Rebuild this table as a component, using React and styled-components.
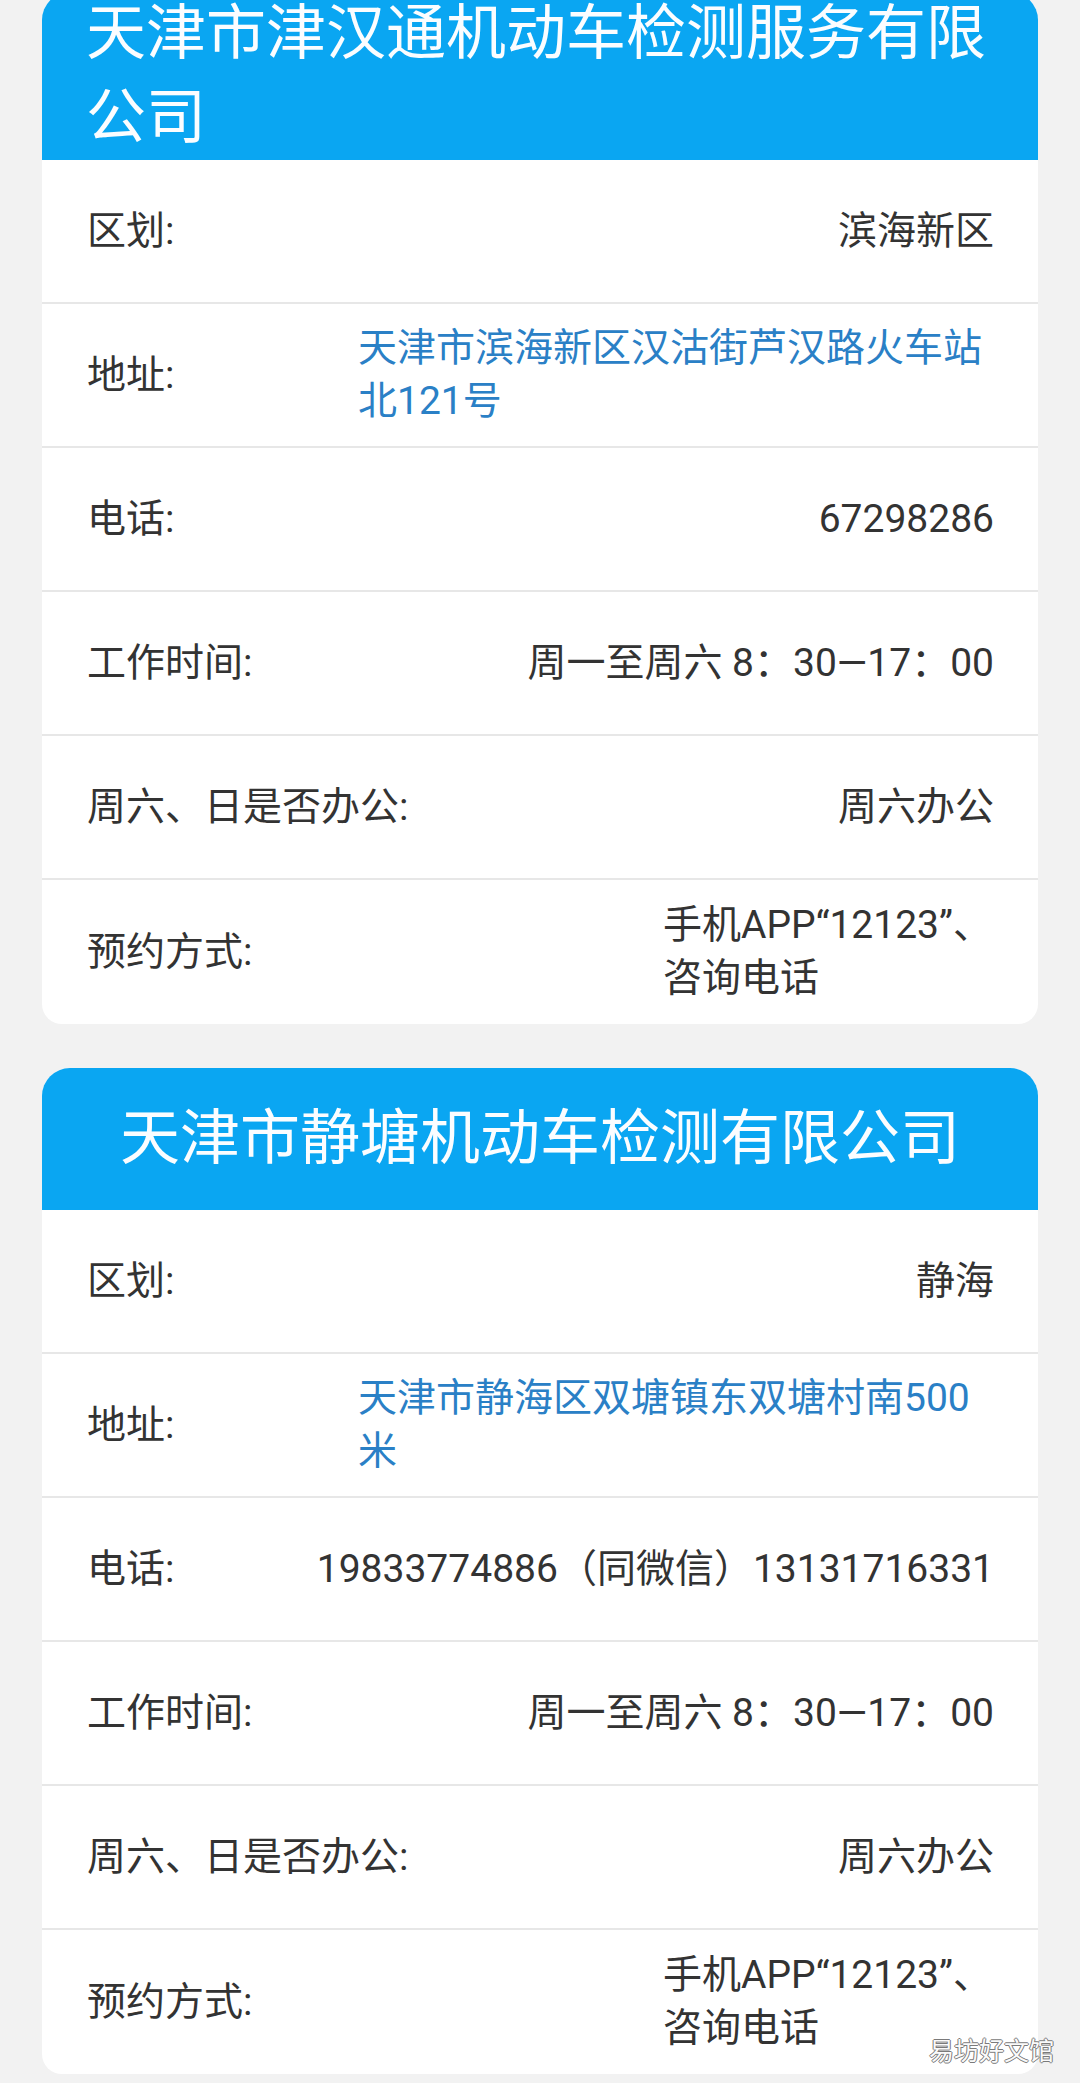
import React from "react";
import styled, { createGlobalStyle } from "styled-components";

const GlobalStyle = createGlobalStyle`
  html, body {
    margin: 0;
    padding: 0;
    background: #f2f2f2;
  }
  body {
    font-family: Roboto, "Noto Sans CJK SC", sans-serif;
    color: #333;
  }
`;

const Page = styled.div`
  position: relative;
  display: flex;
  flex-direction: column;
  gap: 44px;
  padding: 0 42px 9px;
  min-height: 2083px;
  box-sizing: border-box;
`;

const Card = styled.section`
  background: #fff;
  border-radius: 28px 28px 20px 20px;
  overflow: hidden;
  margin-top: ${(p) => (p.scrolled ? "-8px" : "0")};
`;

const Header = styled.h2`
  margin: 0;
  background: #0aa6f2;
  color: #fbfdff;
  font-size: 60px;
  font-weight: 400;
  line-height: ${(p) => (p.tight ? "84px" : "86px")};
  padding: ${(p) => (p.tight ? "0 40px 0 44px" : "28px 43px")};
  text-align: ${(p) => (p.tight ? "left" : "center")};
`;

const Row = styled.div`
  display: flex;
  align-items: center;
  justify-content: space-between;
  min-height: 144px;
  box-sizing: border-box;
  padding: 0 44px 0 45px;
  border-bottom: 2px solid #e7e7e7;

  &:last-child {
    border-bottom: none;
  }
`;

const Label = styled.span`
  flex-shrink: 0;
  font-size: 39px;
  line-height: 53px;
  color: #333;
`;

const Value = styled.span`
  font-size: 39px;
  line-height: 53px;
  color: #333;
  text-align: right;
  white-space: nowrap;
`;

const Address = styled.span`
  flex: 0 0 636px;
  font-size: 39px;
  line-height: 53px;
  color: #2a80c6;
  text-align: left;
`;

const Booking = styled.span`
  flex: 0 0 331px;
  font-size: 39px;
  line-height: 53px;
  color: #333;
  text-align: left;
`;

const Watermark = styled.span`
  position: absolute;
  right: 26px;
  bottom: 16px;
  font-size: 25px;
  line-height: 30px;
  color: #fafafa;
  text-shadow: 1px 0 #7a7a7a, -1px 0 #7a7a7a, 0 1px #7a7a7a, 0 -1px #7a7a7a;
`;

const stations = [
  {
    name: "天津市津汉通机动车检测服务有限公司",
    tight: true,
    district: "滨海新区",
    address: "天津市滨海新区汉沽街芦汉路火车站北121号",
    phone: "67298286",
  },
  {
    name: "天津市静塘机动车检测有限公司",
    tight: false,
    district: "静海",
    address: "天津市静海区双塘镇东双塘村南500米",
    phone: "19833774886（同微信）13131716331",
  },
];

function StationCard({ station }) {
  return (
    <Card scrolled={station.tight}>
      <Header tight={station.tight}>{station.name}</Header>
      <Row>
        <Label>区划:</Label>
        <Value>{station.district}</Value>
      </Row>
      <Row>
        <Label>地址:</Label>
        <Address>{station.address}</Address>
      </Row>
      <Row>
        <Label>电话:</Label>
        <Value>{station.phone}</Value>
      </Row>
      <Row>
        <Label>工作时间:</Label>
        <Value>周一至周六 8：30—17：00</Value>
      </Row>
      <Row>
        <Label>周六、日是否办公:</Label>
        <Value>周六办公</Value>
      </Row>
      <Row>
        <Label>预约方式:</Label>
        <Booking>手机APP“12123”、咨询电话</Booking>
      </Row>
    </Card>
  );
}

export default function App() {
  return (
    <>
      <GlobalStyle />
      <Page>
        {stations.map((s) => (
          <StationCard key={s.name} station={s} />
        ))}
        <Watermark>易坊好文馆</Watermark>
      </Page>
    </>
  );
}
